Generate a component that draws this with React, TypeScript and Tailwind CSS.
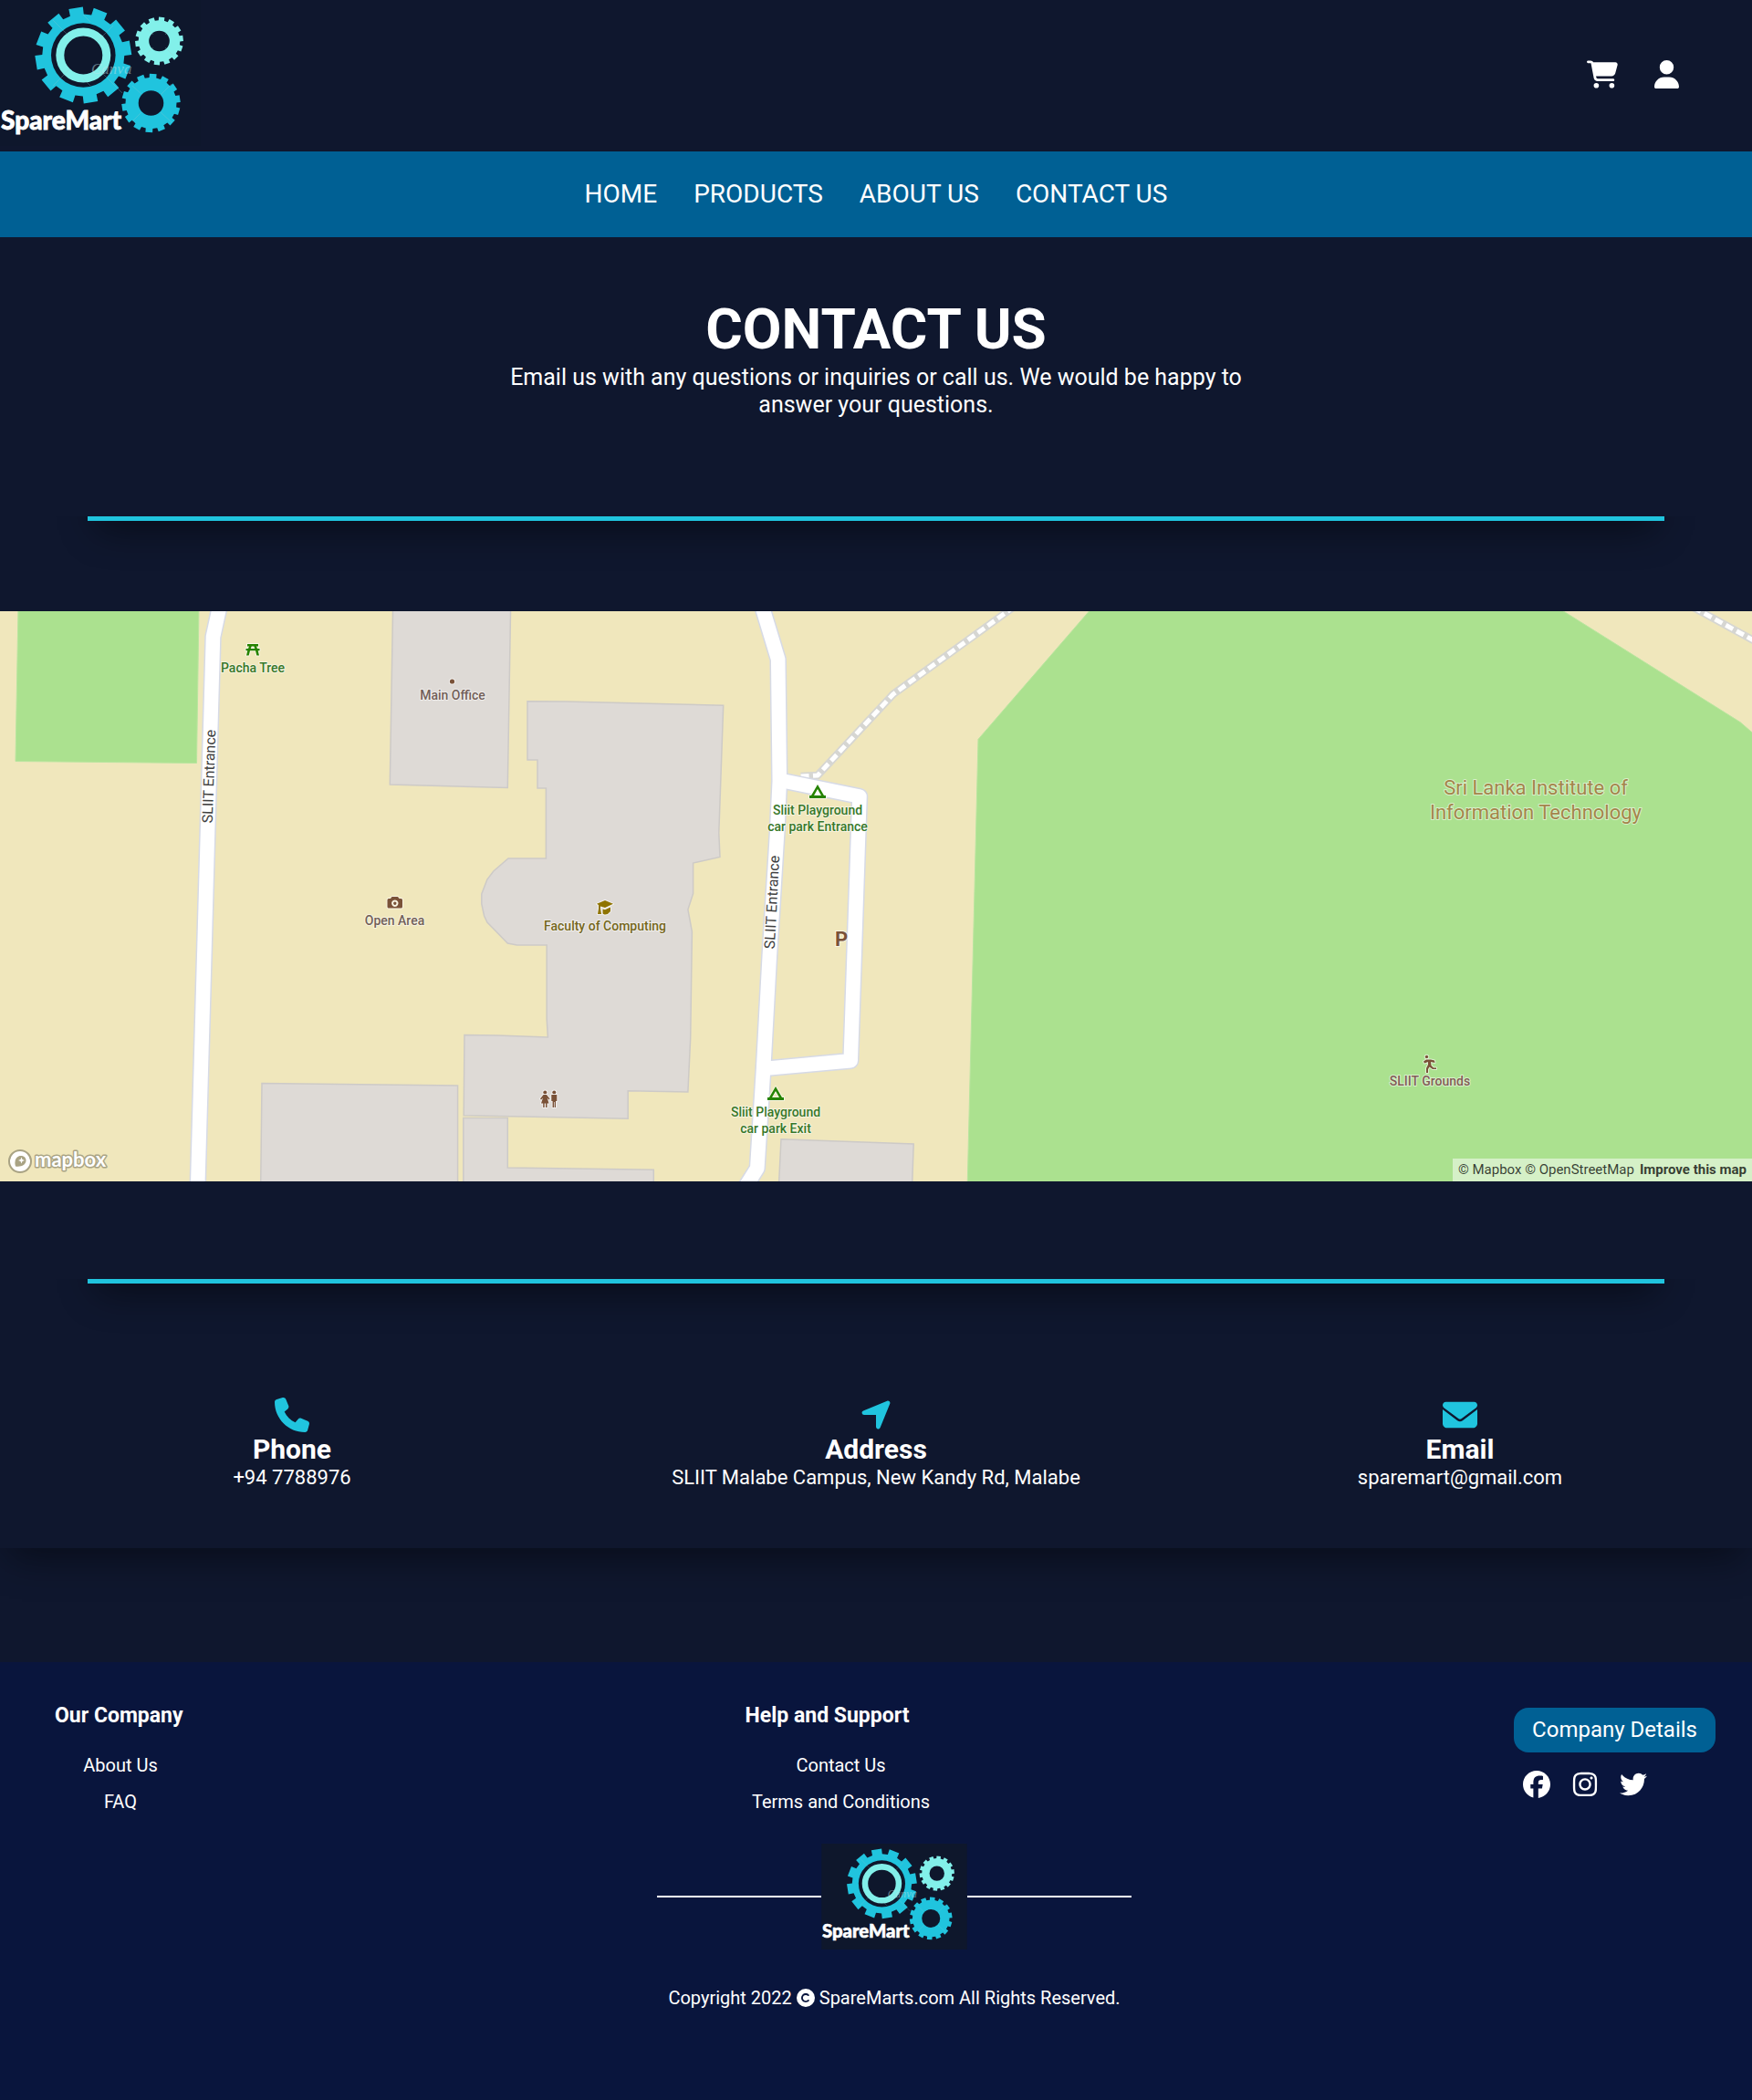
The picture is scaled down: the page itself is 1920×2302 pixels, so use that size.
import type { ReactNode } from "react";
import {
  FaCartShopping,
  FaCopyright,
  FaEnvelope,
  FaFacebook,
  FaInstagram,
  FaLocationArrow,
  FaPhone,
  FaTwitter,
  FaUser,
} from "react-icons/fa6";

function gearPath(cx: number, cy: number, root: number, tip: number, teeth: number, phase: number, width: number) {
  const point = (radius: number, degrees: number) => {
    const a = (degrees * Math.PI) / 180;
    return `${(cx + radius * Math.cos(a)).toFixed(2)} ${(cy + radius * Math.sin(a)).toFixed(2)}`;
  };
  const parts: string[] = [];
  for (let i = 0; i < teeth; i++) {
    const mid = phase + (360 / teeth) * i;
    parts.push(
      point(root, mid - width * 0.52),
      point(tip, mid - width * 0.46),
      point(tip, mid + width * 0.46),
      point(root, mid + width * 0.52),
    );
  }
  return `M${parts.join("L")}Z`;
}

function Logo({ className }: { className: string }) {
  return (
    <svg viewBox="0 0 220 160" className={className} role="img" aria-label="SpareMart">
      <rect width="220" height="160" fill="#0e172c" />
      <path d={gearPath(91.3, 60.5, 45, 53, 12, 21, 18.5)} fill="#20c4de" />
      <circle cx="91.3" cy="60.5" r="35.3" fill="#0e172c" />
      <circle cx="91.3" cy="60.5" r="25.5" fill="none" stroke="#82f0ea" strokeWidth="9" />
      <path d={gearPath(174.5, 45, 22.8, 26.5, 14, -84, 15)} fill="#82f0ea" />
      <circle cx="174.5" cy="45" r="11.3" fill="#0e172c" />
      <path d={gearPath(165.5, 113, 28, 32.3, 14, -86, 15)} fill="#20c4de" />
      <circle cx="165.5" cy="113" r="13.8" fill="#0e172c" />
      <g fill="none" stroke="#a5c9cf" strokeWidth="0.6" opacity="0.45">
        <path d="M58 22L76 40M108 76L134 102M124 28L107 45M76 76L58 94M91 16L99 24M91 86L99 94" />
        <path d="M160 30L168 38M181 52L190 61M188 31L181 38M168 52L160 60M145 94L156 104M176 123L188 134M188 92L176 104M155 123L145 133" />
      </g>
      <text x="100" y="81" fontSize="17" fontStyle="italic" fontFamily="Liberation Serif, serif" fill="#c6e6ea" opacity="0.45">
        Canva
      </text>
      <text
        x="1"
        y="142"
        fontSize="28"
        fontWeight="900"
        fontFamily="Lato, sans-serif"
        fill="#fff"
        stroke="#fff"
        strokeWidth="0.8"
      >
        SpareMart
      </text>
    </svg>
  );
}

const BUILDINGS = [
  "M430.6 -4L559.6 -4L556.3 193.5L427.3 190Z",
  "M287 517.6L501.6 520V629H285.7Z",
  "M507.8 555.5H556.3V610L716.3 612.2V629H507.8Z",
  "M856 578.8L1001.2 584L999.6 629H853.5Z",
  "M578 98.8L620 99L792.7 103.3L787.8 243.3L789 269.4L759.6 276V309.4L753.9 327L758.4 351.4L756.7 467.8L753.9 527L688.2 525.7V556.3L508.2 552.7L509 464.5L545 465L600.4 467L599.2 447V366H566.5L556.3 364L533.9 341L530.6 334L527.8 321V310L533.9 294L540.8 285L557 271H598.4V194H589V163H578Z",
];

const ROADS = [
  "M241 -6L239.6 0L233.5 28L216.7 630",
  "M835 -6L836.7 0L852.7 52.7L854.3 186L851.8 240L843.3 378L836.7 500L829.8 610.6L817 631",
  "M856 185.5L942 203L932.2 492.7L838 501.4",
];

const FOOTPATHS = ["M877.6 181L896 180L978.8 91L1110 -4", "M1856 -4L1920 31L1926 34"];

function Place({
  x,
  y,
  lines,
  fill,
  size = 14,
  leading = 18,
}: {
  x: number;
  y: number;
  lines: string[];
  fill: string;
  size?: number;
  leading?: number;
}) {
  return (
    <text
      x={x}
      y={y}
      fontSize={size}
      fontWeight={size > 16 ? 400 : 500}
      fill={fill}
      textAnchor="middle"
      stroke="#fff"
      strokeOpacity="0.55"
      strokeWidth="2"
      strokeLinejoin="round"
      paintOrder="stroke"
    >
      {lines.map((line, i) => (
        <tspan key={line} x={x} y={y + i * leading}>
          {line}
        </tspan>
      ))}
    </text>
  );
}

function StreetName({ x, y, angle }: { x: number; y: number; angle: number }) {
  return (
    <text
      transform={`translate(${x} ${y}) rotate(${angle})`}
      fontSize="16"
      fill="#404040"
      textAnchor="middle"
      dominantBaseline="central"
    >
      SLIIT Entrance
    </text>
  );
}

function CampusMap() {
  return (
    <svg
      viewBox="0 0 1920 625"
      preserveAspectRatio="xMidYMid slice"
      className="block h-full w-full font-[Roboto,sans-serif]"
      role="img"
      aria-label="Map of the SLIIT Malabe campus"
    >
      <rect width="1920" height="625" fill="#f0e7bc" />
      <g fill="#abe18f" stroke="#b9e59f" strokeWidth="1">
        <path d="M20 -4H218L215.5 166.5L17 164.5Z" />
        <path d="M1197 -4H1707L1907 121.6L1926 138V629H1060.2L1072 140.4Z" />
      </g>
      <g fill="#dedad6" stroke="#cdcac7" strokeWidth="1.5">
        {BUILDINGS.map((d) => (
          <path key={d} d={d} />
        ))}
      </g>
      <g fill="none" strokeLinejoin="round">
        {FOOTPATHS.map((d) => (
          <path key={d} d={d} stroke="#d6d6d2" strokeWidth="8.5" />
        ))}
        {FOOTPATHS.map((d) => (
          <path key={d} d={d} stroke="#fff" strokeWidth="5" strokeDasharray="9 4.4" />
        ))}
        {ROADS.map((d) => (
          <path key={d} d={d} stroke="#d6dae6" strokeWidth="18.5" />
        ))}
        {ROADS.map((d) => (
          <path key={d} d={d} stroke="#fff" strokeWidth="15.5" />
        ))}
      </g>

      <StreetName x={229} y={181} angle={-88} />
      <StreetName x={846} y={319} angle={-87} />

      <g stroke="#fff" strokeOpacity="0.6" strokeWidth="2" paintOrder="stroke" strokeLinejoin="round">
        <path
          fill="#268300"
          d="M271 36H283V38.500H281L282 41H284.500V43.200H282.700L284 48.500H281.300L280 43.200H274L272.700 48.500H270L271.300 43.200H269.500V41H272L273 38.500H271ZM275.700 38.500L274.700 41H279.300L278.300 38.500Z"
        />
        <circle cx="495.500" cy="77" r="2.600" fill="#7a5238" />
        <path
          fill="#7a5238"
          fillRule="evenodd"
          d="M429.500 313H436L437.500 315H439.500Q441 315 441 316.500V324Q441 325.500 439.500 325.500H426Q424.500 325.500 424.500 324V316.500Q424.500 315 426 315H428ZM432.800 316.500A3.700 3.700 0 1 0 432.810 316.500ZM432.800 318.500A1.700 1.700 0 1 1 432.790 318.500Z"
        />
        <path
          fill="#8f7400"
          d="M663 317L672 320.800L663 325L658 323.500V326L659 332H655L656 326V322L654 320.800ZM660.500 326.500L663 327.300L669 324.500V329Q666 333 662.500 332.500Q660 332 660.500 330.500Z"
        />
        <path fill="#268300" fillRule="evenodd" d="M896 190L903 202H905V205H887V202H889ZM896 195L892 202H900Z" />
        <path fill="#268300" fillRule="evenodd" d="M850 521L857 533H859V536H841V533H843ZM850 526L846 533H854Z" />
        <g fill="#7a5238">
          <circle cx="597.300" cy="527.500" r="2" />
          <path d="M595.500 530H599L602.500 534.500L601.500 535.500L599.700 533.500L601.500 539.500H599.500V544H598V539.500H596.700V544H595.200V539.500H593L595 533.500L593 535.500L592 534.500Z" />
          <circle cx="607.300" cy="527.500" r="2" />
          <path d="M604.300 530H610.300V537H609V544H607.700V538H607V544H605.600V537H604.300Z" />
        </g>
        <g fill="#7a5238">
          <circle cx="1563.500" cy="488.500" r="1.700" />
          <path d="M1560 493.500L1563 491.500H1568L1572 492.500L1572.500 495L1568 494L1568.500 498L1571 500.500H1574V502H1570L1566.500 499.500L1565 502V506H1563V501L1565 497V494L1561 495.500Z" />
        </g>
      </g>

      <Place x={277} y={66.500} lines={["Pacha Tree"]} fill="#37782a" />
      <Place x={496} y={97} lines={["Main Office"]} fill="#725f58" />
      <Place x={432.500} y={344} lines={["Open Area"]} fill="#725f58" />
      <Place x={663} y={350} lines={["Faculty of Computing"]} fill="#75671b" />
      <Place x={896} y={222.500} lines={["Sliit Playground", "car park Entrance"]} fill="#37782a" />
      <Place x={850} y={553.500} lines={["Sliit Playground", "car park Exit"]} fill="#37782a" />
      <Place x={1567} y={520} lines={["SLIIT Grounds"]} fill="#825d55" />
      <Place
        x={1683}
        y={200.500}
        lines={["Sri Lanka Institute of", "Information Technology"]}
        fill="#a4854a"
        size={22}
        leading={27}
      />
      <text
        x="922"
        y="366.500"
        fontSize="22"
        fontWeight="700"
        fill="#7a5238"
        textAnchor="middle"
        stroke="#fff"
        strokeOpacity="0.6"
        strokeWidth="2"
        paintOrder="stroke"
      >
        P
      </text>
    </svg>
  );
}

function MapboxMark() {
  return (
    <svg viewBox="0 0 112 30" className="block h-[30px] w-28" role="img" aria-label="Mapbox">
      <circle cx="14" cy="15" r="12" fill="#fff" stroke="#a9a384" strokeWidth="2" />
      <path d="M9 20.500C7.500 15 9 11 12.500 9.500C16 8 20.500 10 20.500 14C20.500 19 15 21.500 9 20.500Z" fill="#a9a384" />
      <path d="M15.500 10.500L16.500 13L19 14L16.500 15L15.500 17.500L14.500 15L12 14L14.500 13Z" fill="#fff" />
      <text
        x="30"
        y="21"
        fontSize="22"
        fontWeight="700"
        fontFamily="Lato, sans-serif"
        fill="#fff"
        stroke="#a9a384"
        strokeWidth="3"
        strokeLinejoin="round"
        paintOrder="stroke"
      >
        mapbox
      </text>
    </svg>
  );
}

/* Teal rule whose shadow falls only below the line. */
function Divider() {
  return (
    <div
      aria-hidden="true"
      className="mx-[5%] h-28 border-b-5 border-[#20c4de] shadow-[0_20px_40px_-10px_rgba(0,0,0,0.45)] [clip-path:inset(calc(100%-5px)_-40px_-70px_-40px)]"
    />
  );
}

function ContactCard({ icon, title, detail }: { icon: ReactNode; title: string; detail: string }) {
  return (
    <div className="flex flex-col items-center text-center">
      <span className="text-[#20c4de]">{icon}</span>
      <h2 className="text-[30px] leading-[37px] font-bold">{title}</h2>
      <p className="text-[22px] leading-[26px]">{detail}</p>
    </div>
  );
}

function FooterLinks({ title, links, className }: { title: string; links: string[]; className: string }) {
  return (
    <div className={className}>
      <h3 className="text-[23px] leading-[26px] font-bold">{title}</h3>
      <ul className="mt-[21px] text-center text-xl leading-10">
        {links.map((link) => (
          <li key={link}>
            <a href="#">{link}</a>
          </li>
        ))}
      </ul>
    </div>
  );
}

const NAV = ["HOME", "PRODUCTS", "ABOUT US", "CONTACT US"];

export default function App() {
  return (
    <div className="overflow-x-clip bg-[#0f172e] font-[Roboto,sans-serif] text-white">
      <header>
        <div className="flex items-center justify-between pr-20 pb-1">
          <a href="#" className="mb-0.5">
            <Logo className="block h-40 w-[220px]" />
          </a>
          <div className="flex items-center gap-10">
            <a href="#" aria-label="Cart">
              <FaCartShopping className="h-[31px] w-[34px]" />
            </a>
            <a href="#" aria-label="Account">
              <FaUser className="h-[31px] w-[27px]" />
            </a>
          </div>
        </div>
        <nav className="flex flex-wrap items-center justify-center gap-x-10 bg-[#006094] py-7 text-[28px] leading-[38px]">
          {NAV.map((item) => (
            <a key={item} href="#">
              {item}
            </a>
          ))}
        </nav>
      </header>

      <main>
        <section className="pt-[63px] text-center">
          <h1 className="text-[62px] leading-[76px] font-bold">CONTACT US</h1>
          <p className="mx-auto max-w-[820px] text-[25px] leading-[30px]">
            Email us with any questions or inquiries or call us. We would be happy to answer your questions.
          </p>
        </section>

        <Divider />

        <section className="relative mt-[99px] h-[625px] overflow-hidden">
          <CampusMap />
          <a href="#" className="absolute bottom-[7px] left-2">
            <MapboxMark />
          </a>
          <div className="absolute right-0 bottom-0 flex gap-1.5 bg-white/50 px-1.5 text-[15px] leading-[25px] text-black/75">
            <span>
              <a href="#">© Mapbox</a> <a href="#">© OpenStreetMap</a>
            </span>
            <a href="#" className="font-bold">
              Improve this map
            </a>
          </div>
        </section>

        <Divider />

        <section className="grid grid-cols-3 pt-[125px] pb-16 shadow-[0_20px_40px_-10px_rgba(0,0,0,0.45)] [clip-path:inset(0_0_-70px_0)]">
          <ContactCard icon={<FaPhone className="size-[38px]" />} title="Phone" detail="+94 7788976" />
          <ContactCard
            icon={<FaLocationArrow className="size-[38px]" />}
            title="Address"
            detail="SLIIT Malabe Campus, New Kandy Rd, Malabe"
          />
          <ContactCard icon={<FaEnvelope className="size-[38px]" />} title="Email" detail="sparemart@gmail.com" />
        </section>
      </main>

      <footer className="mt-[125px] bg-[#09153d] pt-[46px] pb-[97px] pl-10">
        <div className="flex justify-between pr-10 pl-5">
          <FooterLinks title="Our Company" links={["About Us", "FAQ"]} className="w-36" />
          <FooterLinks
            title="Help and Support"
            links={["Contact Us", "Terms and Conditions"]}
            className="mr-5 w-[210px]"
          />
          <div className="pt-1">
            <button type="button" className="rounded-2xl bg-[#006094] px-5 py-[9px] text-2xl leading-[31px]">
              Company Details
            </button>
            <div className="mt-5 flex gap-[23px] pl-2.5">
              <a href="#" aria-label="Facebook">
                <FaFacebook className="size-[30px]" />
              </a>
              <a href="#" aria-label="Instagram">
                <FaInstagram className="size-[30px]" />
              </a>
              <a href="#" aria-label="Twitter">
                <FaTwitter className="size-[30px]" />
              </a>
            </div>
          </div>
        </div>
        <div className="mt-[26px] flex items-center justify-center">
          <div className="h-0.5 w-[180px] bg-white" />
          <Logo className="block h-[116px] w-40" />
          <div className="h-0.5 w-[180px] bg-white" />
        </div>
        <p className="mt-[38px] flex items-center justify-center gap-[5px] text-xl leading-[30px]">
          Copyright 2022 <FaCopyright className="size-5" /> SpareMarts.com All Rights Reserved.
        </p>
      </footer>
    </div>
  );
}
